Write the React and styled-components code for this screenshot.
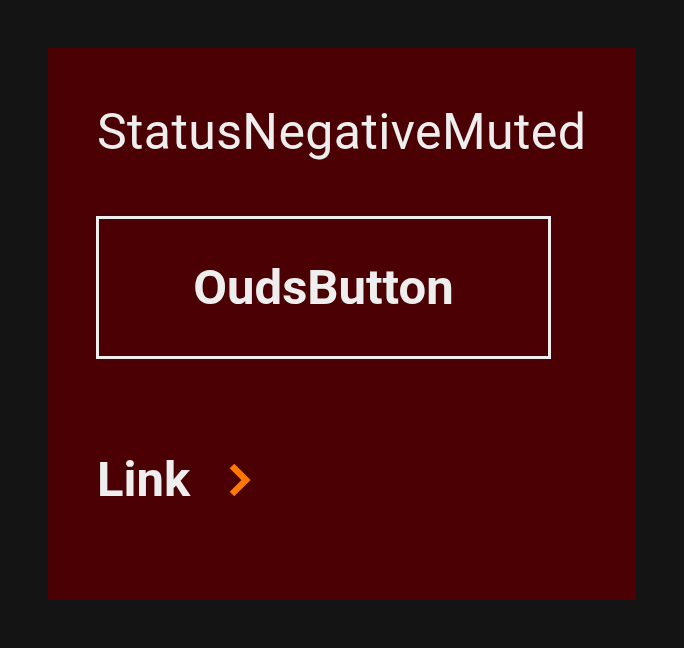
import styled, { createGlobalStyle } from "styled-components"

const Global = createGlobalStyle`
  html, body {
    margin: 0;
    background: #141414;
    font-family: Roboto, "Noto Sans", sans-serif;
  }
`

const Page = styled.div`
  width: 684px;
  height: 648px;
  padding: 48px;
  box-sizing: border-box;
`

const Panel = styled.div`
  background: #4b0003;
  height: 552px;
  padding: 0 48px;
  box-sizing: border-box;
  display: flex;
  flex-direction: column;
  align-items: flex-start;
  color: #eeeeee;
`

const Title = styled.div`
  font-size: 50px;
  line-height: 60px;
  margin-top: 54px;
  margin-left: 1px;
  letter-spacing: 0.4px;
`

const Button = styled.div`
  margin-top: 54px;
  width: 455px;
  height: 143px;
  box-sizing: border-box;
  border: 3px solid #eeeeee;
  display: flex;
  align-items: center;
  justify-content: center;
  font-size: 49px;
  font-weight: 700;
`

const LinkRow = styled.div`
  margin-top: 93px;
  margin-left: 1px;
  display: flex;
  align-items: center;
  gap: 37px;
  font-size: 49px;
  line-height: 56px;
  font-weight: 700;
`

const Chevron = () => (
  <svg width="24" height="36" viewBox="0 0 24 36">
    <polyline points="5,4 19,18 5,32" fill="none" stroke="#ff7900" strokeWidth="6.5" />
  </svg>
)

function App() {
  return (
    <Page>
      <Global />
      <Panel>
        <Title>StatusNegativeMuted</Title>
        <Button>OudsButton</Button>
        <LinkRow>
          <span>Link</span>
          <Chevron />
        </LinkRow>
      </Panel>
    </Page>
  )
}

export default App
